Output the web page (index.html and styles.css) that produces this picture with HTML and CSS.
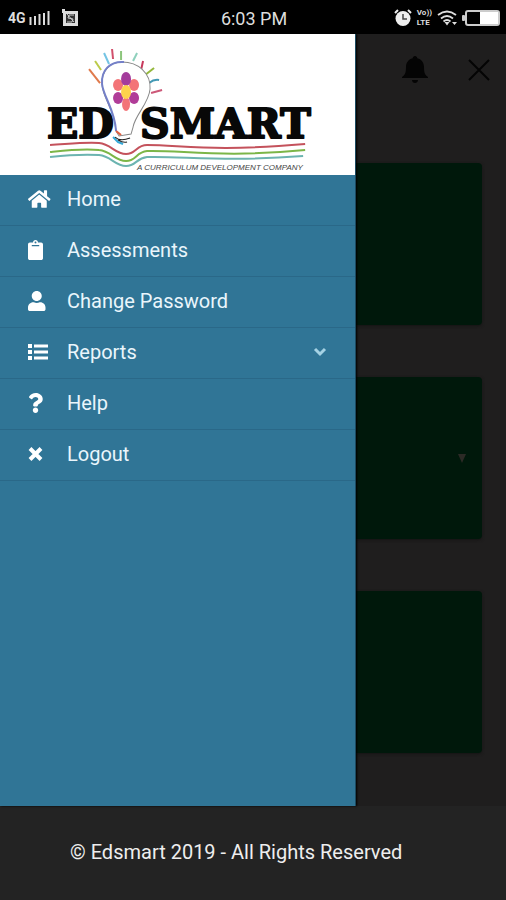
FILE: index.html
```html
<!DOCTYPE html>
<html lang="en">
<head>
    <meta charset="UTF-8">
    <meta name="viewport" content="width=device-width, initial-scale=1.0">
    <title>Edsmart</title>
    <link rel="stylesheet" href="styles.css">
</head>
<body>
    <header class="status-bar">
        <div class="status-left">
            <span class="network">4G</span>
            <svg class="signal" width="21" height="14" viewBox="0 0 21 14">
                <path d="M1.500 6v8M6 5v9M10.500 3v11M15 2v12M19.500 0v14" stroke="#ddd" stroke-width="2"/>
            </svg>
            <svg class="sim" width="16" height="18" viewBox="0 0 16 18">
                <path d="M0 0h3v2h13v15H1V4H0z" fill="#ddd"/>
                <path d="M4 5h9v9H4z" fill="#333"/>
                <path d="M12 6H7l-1 3 5 1-1 3H5M5 5l7 8" fill="none" stroke="#ccc" stroke-width="1"/>
            </svg>
        </div>
        <span class="time">6:03 PM</span>
        <div class="status-right">
            <svg width="18" height="18" viewBox="0 0 18 18">
                <circle cx="9" cy="9.500" r="7.500" fill="#eee"/>
                <path d="M1 4l3-3M17 4l-3-3" stroke="#eee" stroke-width="2"/>
                <path d="M9 5v5h4" fill="none" stroke="#444" stroke-width="1.500"/>
            </svg>
            <span class="volte"><span>Vo))</span><span>LTE</span></span>
            <svg width="20" height="16" viewBox="0 0 20 16">
                <path d="M1 5q9-7 18 0M4 8.500q6-5 12 0M6.500 11.500q3.500-3 7 0" fill="none" stroke="#ddd" stroke-width="1.800"/>
                <path d="M7.500 12h5L10 15.500zM15 12h5l-2.500 3z" fill="#ddd"/>
            </svg>
            <svg width="38" height="16" viewBox="0 0 38 16">
                <rect x="4" y="1" width="33" height="14" rx="2" fill="none" stroke="#ccc" stroke-width="2"/>
                <rect x="18" y="2" width="18" height="12" fill="#fff"/>
                <rect x="0" y="5" width="3" height="6" rx="1" fill="#ccc"/>
            </svg>
        </div>
    </header>

    <main class="content">
        <aside class="drawer">
            <div class="logo">
                <svg viewBox="0 0 355 141" role="img" aria-label="Edsmart">
                    <!-- rays -->
                    <g class="rays">
                        <path d="M89 35l11 14" stroke="#e07a4c"/>
                        <path d="M95 27l6 9" stroke="#bccb4a"/>
                        <path d="M104 19l5 11" stroke="#74c4e4"/>
                        <path d="M112 15l1 10" stroke="#d2506c"/>
                        <path d="M121 17v9" stroke="#8cc57c"/>
                        <path d="M137 19l-4 8" stroke="#8ed0bc"/>
                        <path d="M143 27l-2 9" stroke="#c8385c"/>
                        <path d="M154 34l-9 7" stroke="#94b83c"/>
                        <path d="M159 46q-5-1-10 3" fill="none" stroke="#4298b4"/>
                        <path d="M162 56l-11 3" stroke="#cc5878"/>
                    </g>
                    <!-- name -->
                    <text class="logo-name" x="47" y="104">ED</text>
                    <text class="logo-name" x="140" y="104">SMART</text>
                    <!-- bulb -->
                    <path d="M122 28c-13 0-21 10-20 23 1 14 12 23 14 46l3 5 12-2 2-7c2-12 16-24 17-38 1-16-12-27-28-27z" fill="#fff" stroke="#888" stroke-width="1"/>
                    <path d="M124 28c-14-1-23 8-22 22 1 12 13 26 14 47" fill="none" stroke="#7480c8" stroke-width="2"/>
                    <path d="M116 97l5 4" stroke="#e06040" stroke-width="2"/>
                    <path d="M113 103l5 5 5 2" fill="none" stroke="#35a9d8" stroke-width="2"/>
                    <path d="M115 103q5 5 15 1M118 106q5 3 9 2" fill="none" stroke="#222" stroke-width="1"/>
                    <!-- flower -->
                    <ellipse cx="118" cy="51" rx="5" ry="6" fill="#f37478"/>
                    <ellipse cx="134" cy="51" rx="5" ry="6" fill="#f37478"/>
                    <ellipse cx="126" cy="70" rx="4" ry="7" fill="#f37478"/>
                    <ellipse cx="126" cy="45" rx="5" ry="7" fill="#a43c9c"/>
                    <ellipse cx="118" cy="64" rx="5" ry="6" fill="#b03c98"/>
                    <ellipse cx="134" cy="64" rx="5" ry="6" fill="#b03c98"/>
                    <ellipse cx="126" cy="58" rx="5" ry="7" fill="#fdd34c"/>
                    <!-- book lines -->
                    <g class="book">
                        <path d="M50 111c18-1 34-3 49-2 12 1 16 11 27 11 10 0 10-9 21-9 35 0 65 7 158-1" stroke="#c4525c"/>
                        <path d="M50 118c18-2 34-4 49-2 12 1 16 11 27 11 10 0 10-9 21-10 35-1 75 7 158-1" stroke="#7cb648"/>
                        <path d="M50 123c18-2 34-3 49-2 12 1 16 11 27 11 10 0 10-8 21-9 35-1 80 5 156-1" stroke="#6cb4b0"/>
                    </g>
                    <text class="logo-tagline" x="137" y="136">A CURRICULUM DEVELOPMENT COMPANY</text>
                </svg>
            </div>
            <nav class="menu">
                <a class="menu-item" href="#">
                    <span class="icon"><svg height="20" viewBox="0 0 576 512"><path d="M280.370 148.260L96 300.110V464a16 16 0 0 0 16 16l112.060-.29a16 16 0 0 0 15.920-16V368a16 16 0 0 1 16-16h64a16 16 0 0 1 16 16v95.640a16 16 0 0 0 16 16.050L464 480a16 16 0 0 0 16-16V300L295.670 148.260a12.190 12.190 0 0 0-15.300 0zM571.600 251.470L488 182.560V44.050a12 12 0 0 0-12-12h-56a12 12 0 0 0-12 12v72.610L318.470 43a48 48 0 0 0-61 0L4.340 251.470a12 12 0 0 0-1.600 16.900l25.500 31A12 12 0 0 0 45.150 301l235.220-193.740a12.190 12.190 0 0 1 15.300 0L530.900 301a12 12 0 0 0 16.900-1.600l25.500-31a12 12 0 0 0-1.700-16.930z"/></svg></span>
                    <span>Home</span>
                </a>
                <a class="menu-item" href="#">
                    <span class="icon"><svg height="20" viewBox="0 0 384 512"><path d="M384 112v352c0 26.510-21.490 48-48 48H48c-26.510 0-48-21.490-48-48V112c0-26.510 21.490-48 48-48h80c0-35.290 28.710-64 64-64s64 28.710 64 64h80c26.510 0 48 21.490 48 48zM192 40c-13.255 0-24 10.745-24 24s10.745 24 24 24 24-10.745 24-24-10.745-24-24-24m96 114v-20a6 6 0 0 0-6-6H102a6 6 0 0 0-6 6v20a6 6 0 0 0 6 6h180a6 6 0 0 0 6-6z"/></svg></span>
                    <span>Assessments</span>
                </a>
                <a class="menu-item" href="#">
                    <span class="icon"><svg height="20" viewBox="0 0 448 512"><path d="M224 256c70.700 0 128-57.300 128-128S294.700 0 224 0 96 57.300 96 128s57.300 128 128 128zm89.600 32h-16.700c-22.200 10.200-46.900 16-72.900 16s-50.600-5.800-72.900-16h-16.700C60.200 288 0 348.200 0 422.400V464c0 26.500 21.500 48 48 48h352c26.500 0 48-21.500 48-48v-41.600c0-74.200-60.200-134.400-134.400-134.400z"/></svg></span>
                    <span>Change Password</span>
                </a>
                <button class="menu-item" type="button" aria-expanded="false">
                    <span class="icon"><svg height="20" viewBox="0 0 20 20"><path d="M0 2h4v4H0zM0 8h4v4H0zM0 14h4v4H0zM6 2.500h14v3H6zM6 8.500h14v3H6zM6 14.500h14v3H6z"/></svg></span>
                    <span>Reports</span>
                    <svg class="chevron" width="14" height="10" viewBox="0 0 14 10"><path d="M2 2l5 5 5-5" fill="none" stroke="#a5d2e4" stroke-width="3"/></svg>
                </button>
                <a class="menu-item" href="#">
                    <span class="icon"><svg height="20" viewBox="0 0 384 512"><path d="M202.021 0C122.202 0 70.503 32.703 29.914 91.026c-7.363 10.580-5.093 25.086 5.178 32.874l43.138 32.709c10.373 7.865 25.132 6.026 33.253-4.148 25.049-31.381 43.630-49.449 82.757-49.449 30.764 0 68.816 19.799 68.816 49.631 0 22.552-18.617 34.134-48.993 51.164-35.423 19.860-82.299 44.576-82.299 106.405V320c0 13.255 10.745 24 24 24h72.471c13.255 0 24-10.745 24-24v-5.773c0-42.860 125.268-44.645 125.268-160.627C377.504 66.256 286.902 0 202.021 0zM192 373.459c-38.196 0-69.271 31.075-69.271 69.271 0 38.195 31.075 69.270 69.271 69.270s69.271-31.075 69.271-69.271-31.075-69.270-69.271-69.270z"/></svg></span>
                    <span>Help</span>
                </a>
                <a class="menu-item" href="#">
                    <span class="icon"><svg height="20" viewBox="0 0 15 20"><path d="M2 4.500l11 11M13 4.500l-11 11" fill="none" stroke="#fff" stroke-width="4"/></svg></span>
                    <span>Logout</span>
                </a>
            </nav>
        </aside>

        <section class="page">
            <div class="toolbar">
                <button class="tool" type="button" aria-label="Notifications">
                    <svg width="26" height="28" viewBox="0 0 26 28"><path d="M13 0c1.500 0 2 1 2.300 2.200C20 3.500 22 7 22 11c0 6 1 8 4 10v1H0v-1c3-2 4-4 4-10 0-4 2-7.500 6.700-8.800C11 1 11.500 0 13 0zM10 24h6c0 4-6 4-6 0z" fill="#040404"/></svg>
                </button>
                <button class="tool" type="button" aria-label="Close">
                    <svg width="22" height="22" viewBox="0 0 22 22"><path d="M1 1l20 20M21 1L1 21" stroke="#040404" stroke-width="2"/></svg>
                </button>
            </div>
            <div class="cards">
                <div class="card"></div>
                <div class="card"><svg width="8" height="9" viewBox="0 0 8 9"><path d="M0 0h8L4 9z" fill="#2c2a26"/></svg></div>
                <div class="card"></div>
            </div>
        </section>
    </main>

    <footer class="footer">© Edsmart 2019 - All Rights Reserved</footer>
</body>
</html>
```

FILE: styles.css
```css
* {
    box-sizing: border-box;
}
body {
    margin: 0;
    min-height: 100vh;
    display: flex;
    flex-direction: column;
    background-color: #1f1e1e;
    font-family: Roboto, "Liberation Sans", sans-serif;
    font-size: 20px;
    color: #fff;
}
svg {
    display: block;
}
button {
    border: 0;
    background: none;
    font: inherit;
    color: inherit;
}

/* phone status bar */
.status-bar {
    height: 34px;
    padding: 2px 6px 0 8px;
    display: grid;
    grid-template-columns: 1fr auto 1fr;
    align-items: center;
    background-color: #000;
    color: #ddd;
}
.status-left,
.status-right {
    display: flex;
    align-items: center;
}
.status-right {
    justify-content: flex-end;
    gap: 5px;
}
.network {
    font-size: 14px;
    font-weight: bold;
}
.signal {
    margin: 0 12px 0 3px;
}
.time {
    font-size: 18px;
}
.volte {
    display: flex;
    flex-direction: column;
    font-size: 8px;
    font-weight: bold;
    line-height: 10px;
}

/* drawer */
.content {
    flex: 1;
    display: grid;
    grid-template-columns: calc(70% + 2px) 1fr;
}
.drawer {
    position: relative;
    z-index: 1;
    background-color: #307596;
    border-right: 1px solid #1c4a60;
    box-shadow: 1px 0 2px #000;
}
.logo {
    background-color: #fff;
}
.rays path {
    stroke-width: 2;
}
.book path {
    fill: none;
    stroke-width: 2;
}
.logo-name {
    font-family: "DejaVu Serif", serif;
    font-size: 41px;
    font-weight: bold;
    fill: #080808;
    stroke: #080808;
    stroke-width: 2;
    stroke-linejoin: round;
}
.logo-tagline {
    font-family: "Liberation Sans", sans-serif;
    font-size: 8px;
    font-style: italic;
    fill: #444;
}
.menu {
    display: flex;
    flex-direction: column;
}
.menu-item {
    height: 51px;
    padding: 0 28px 2px;
    display: flex;
    align-items: center;
    border-bottom: 1px solid #2a6888;
    color: #eaf6fc;
    text-align: left;
    text-decoration: none;
}
.icon {
    width: 39px;
}
.icon svg {
    fill: #fff;
}
.chevron {
    margin-left: auto;
}

/* dimmed page */
.toolbar {
    height: 72px;
    padding-right: 16px;
    display: flex;
    align-items: center;
    justify-content: flex-end;
    gap: 40px;
}
.tool {
    padding: 0;
}
.cards {
    padding: 57px 24px 52px 0;
    display: flex;
    flex-direction: column;
    gap: 52px;
}
.card {
    height: 162px;
    padding-right: 16px;
    display: flex;
    align-items: center;
    justify-content: flex-end;
    background-color: #00180b;
    border-radius: 0 4px 4px 0;
    box-shadow: 0 1px 3px #141414;
}

.footer {
    height: 94px;
    padding: 0 70px 2px;
    display: flex;
    align-items: center;
    background-color: #232323;
    color: #eee;
}
```
